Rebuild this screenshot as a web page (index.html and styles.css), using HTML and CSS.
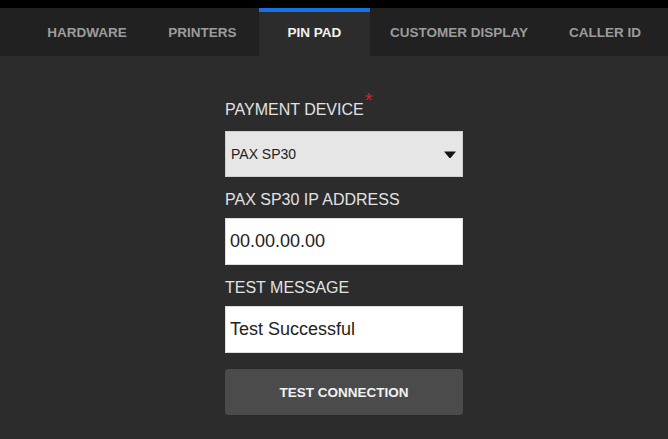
FILE: index.html
```html
<!DOCTYPE html>
<html lang="en">
<head>
  <meta charset="UTF-8" />
  <meta name="viewport" content="width=device-width, initial-scale=1" />
  <title>Pin Pad Settings</title>
  <link rel="stylesheet" href="styles.css">
</head>
<body>

  <div class="topbar"></div>

  <nav class="tabs">
    <a class="tab">HARDWARE</a>
    <a class="tab">PRINTERS</a>
    <a class="tab active">PIN PAD</a>
    <a class="tab">CUSTOMER DISPLAY</a>
    <a class="tab">CALLER ID</a>
  </nav>

  <main class="settings">
    <form class="settings-form">
      <div class="field">
        <label class="field-label required">PAYMENT DEVICE<span class="star">*</span></label>
        <div class="select">
          <span>PAX SP30</span>
          <svg width="12" height="7" viewBox="0 0 12 7"><path d="M0 0.5 H12 L6.6 7 H5.4 Z" fill="#151515"/></svg>
        </div>
      </div>

      <div class="field">
        <label class="field-label">PAX SP30 IP ADDRESS</label>
        <input class="text-input" type="text" value="00.00.00.00">
      </div>

      <div class="field">
        <label class="field-label">TEST MESSAGE</label>
        <input class="text-input" type="text" value="Test Successful">
      </div>

      <button type="button" class="test-btn">TEST CONNECTION</button>
    </form>
  </main>

</body>
</html>
```

FILE: styles.css
```css
body {
  margin: 0;
  background: #2c2c2c;
  font-family: "Liberation Sans", Arial, sans-serif;
  height: 100vh;
  overflow: hidden;
}

.topbar {
  height: 8px;
  background: #000;
}

/* Tabs */
.tabs {
  display: grid;
  grid-template-columns: 118px 113px 111px 178px 114px;
  padding-left: 28px;
  height: 48px;
  background: #212121;
}

.tab {
  display: flex;
  align-items: center;
  justify-content: center;
  font-size: 13.5px;
  font-weight: bold;
  color: #9c9c9c;
  cursor: pointer;
}

.tab.active {
  background: #2c2c2c;
  color: #f2f2f2;
  box-shadow: inset 0 4px 0 #1a6fe6;
}

/* Form */
.settings {
  padding-top: 44px;
}

.settings-form {
  width: 238px;
  margin: 0 auto;
  padding-left: 20px;
}

.field {
  margin-bottom: 13px;
}

.field-label {
  display: block;
  font-size: 16px;
  line-height: 20px;
  color: #e2e2e2;
  margin-bottom: 8px;
}

.field-label.required {
  margin-bottom: 11px;
}

.star {
  position: relative;
  top: -8px;
  margin-left: 1px;
  color: #c7262b;
  font-size: 20px;
  line-height: 0;
}

.select {
  display: flex;
  align-items: center;
  justify-content: space-between;
  box-sizing: border-box;
  height: 46px;
  padding: 0 6px 0 5px;
  background: #e6e6e6;
  border: 1px solid #cfcfcf;
  font-size: 14px;
  color: #222;
}

.text-input {
  display: block;
  box-sizing: border-box;
  width: 100%;
  height: 47px;
  padding: 0 4px;
  margin: 0;
  border: 1px solid #dcdcdc;
  background: #fff;
  font-family: "Liberation Sans", Arial, sans-serif;
  font-size: 18px;
  color: #222;
  outline: none;
}

.test-btn {
  display: block;
  width: 100%;
  height: 46px;
  margin-top: 16px;
  border: none;
  border-radius: 3px;
  background: #4b4b4b;
  color: #f2f2f2;
  font-family: "Liberation Sans", Arial, sans-serif;
  font-size: 13.5px;
  font-weight: bold;
  cursor: pointer;
}
```
